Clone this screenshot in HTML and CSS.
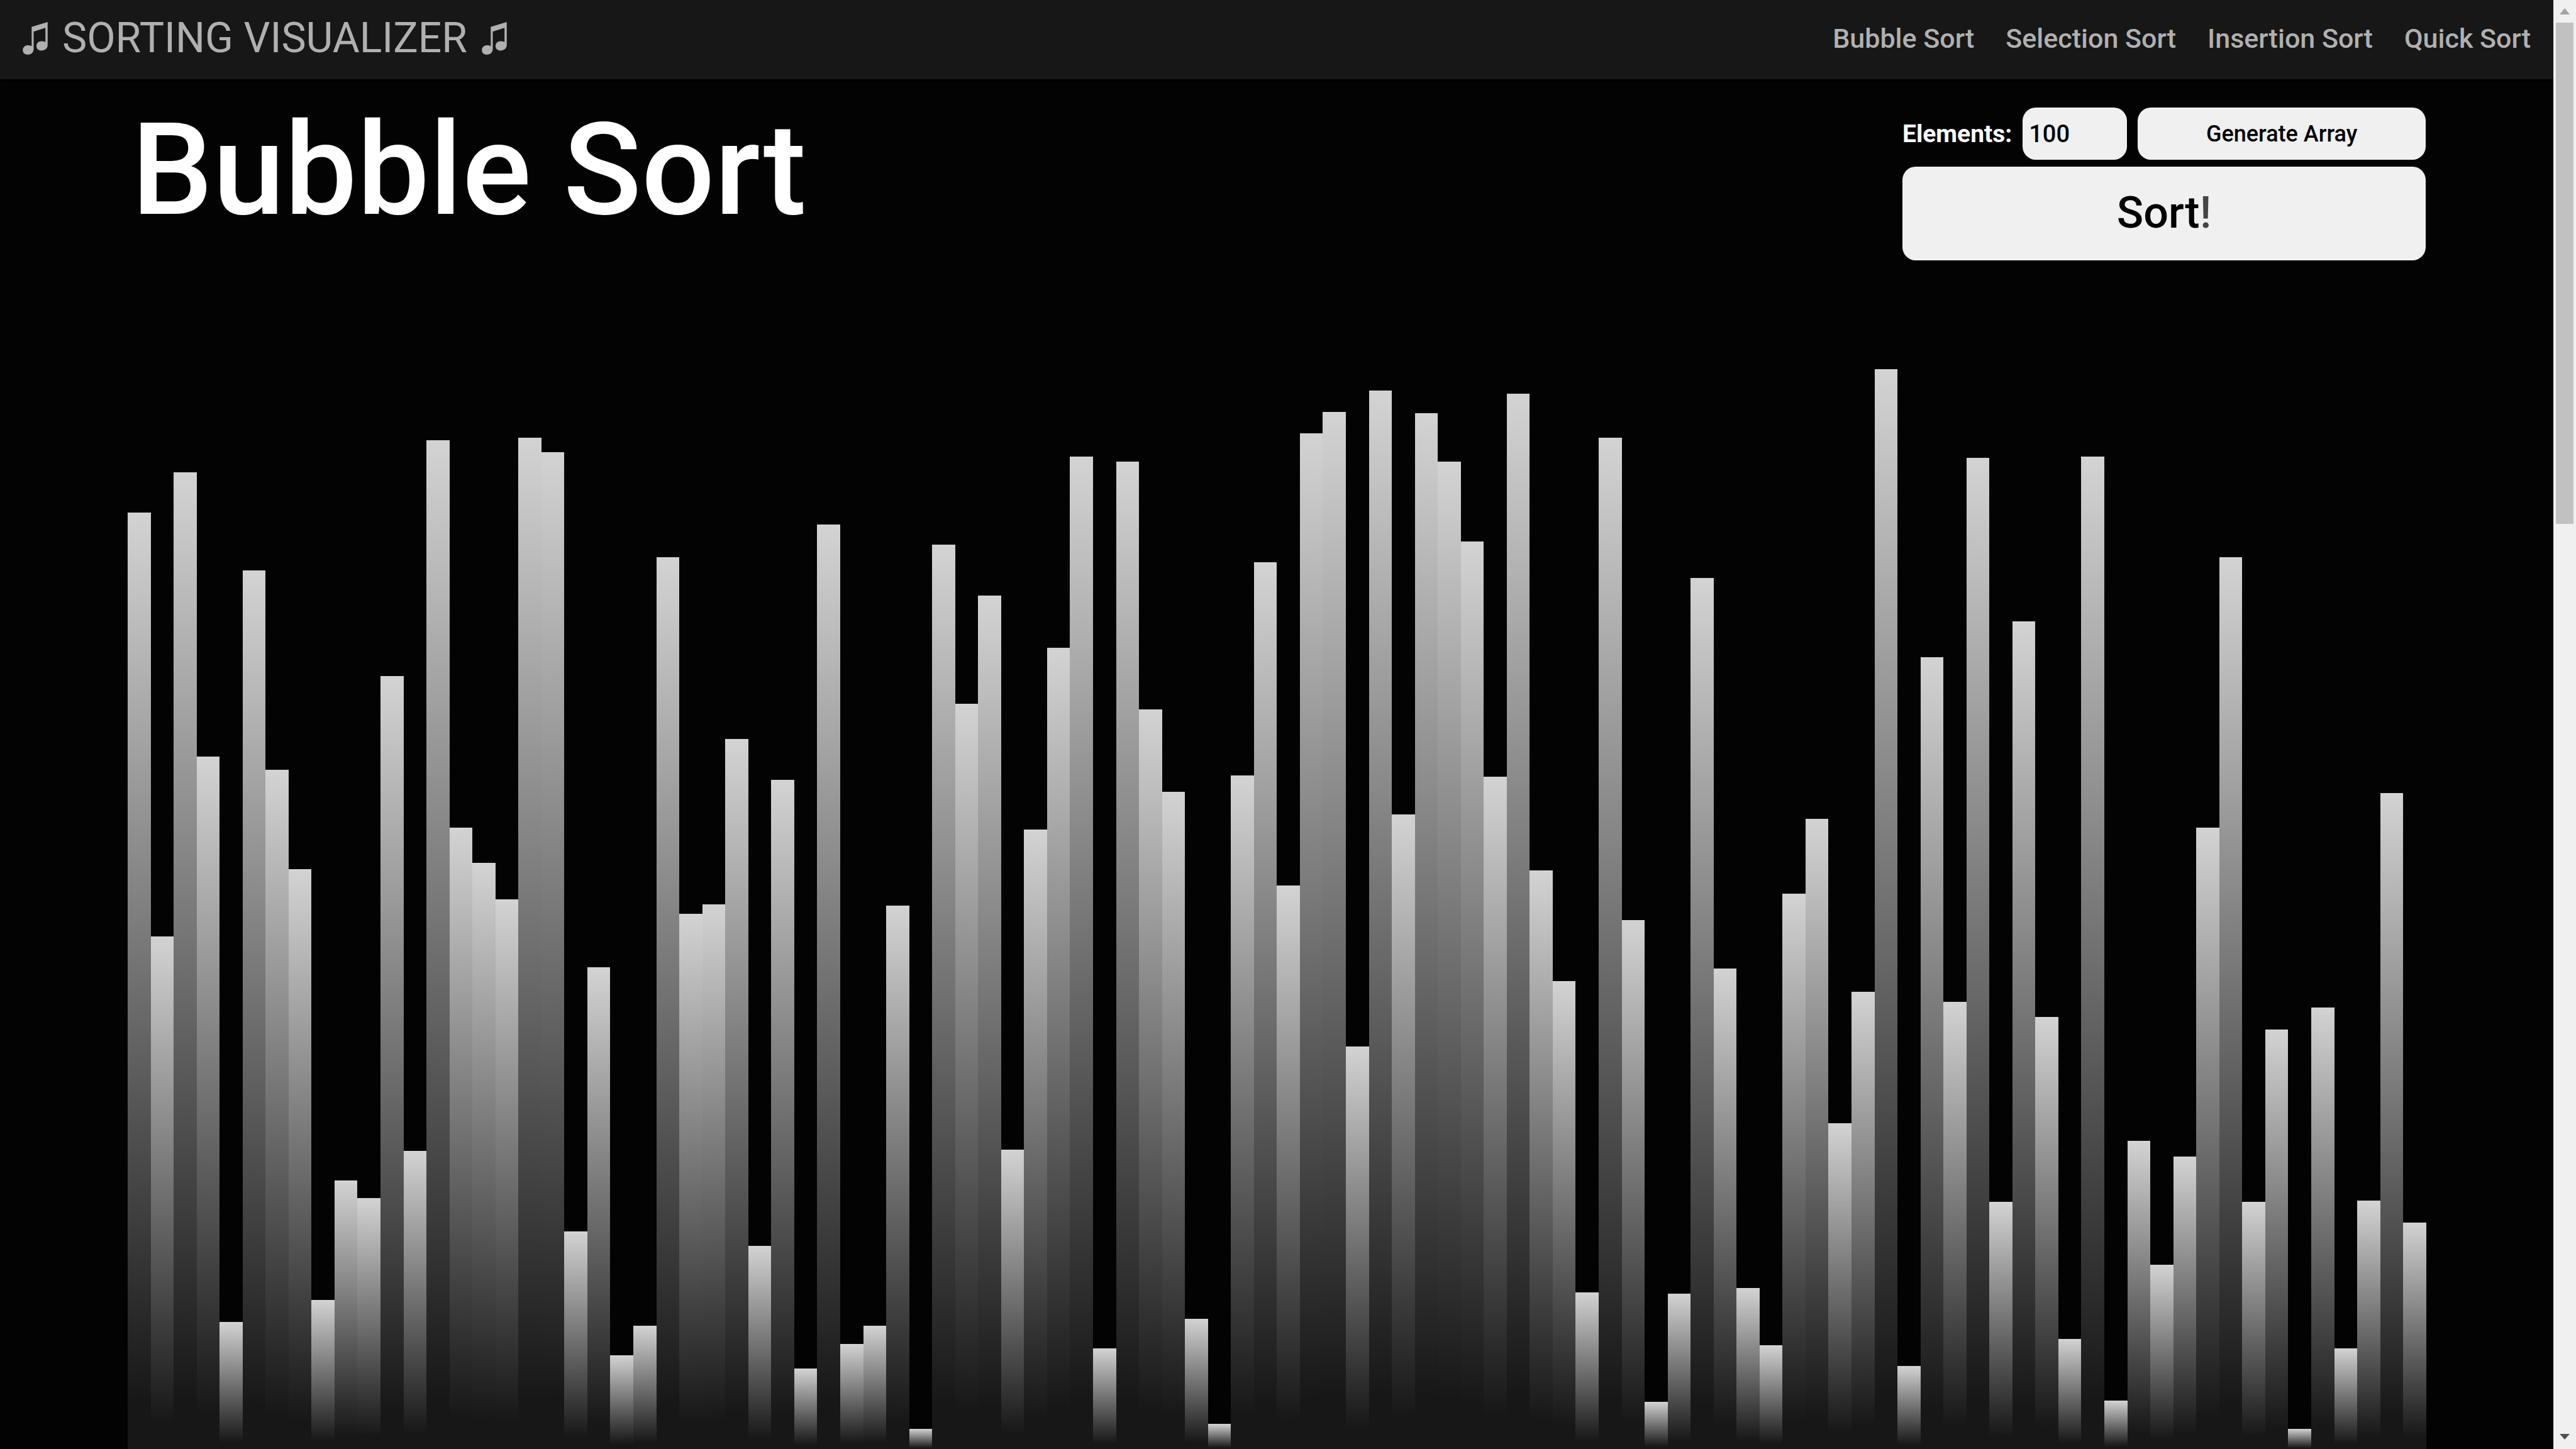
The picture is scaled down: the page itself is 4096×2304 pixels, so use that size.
FILE: index.html
```html
<!DOCTYPE html>
<html lang="en">
<head>
<meta charset="utf-8">
<title>Sorting Visualizer</title>
<link rel="stylesheet" href="styles.css">
</head>
<body>
<div class="page">
  <header class="navbar">
    <a class="brand" href="#">
      <svg class="note" viewBox="0 0 222 292" aria-hidden="true"><path d="M79 44 222 0V207C222 235 198 255 164 255 138 255 122 238 122 214 122 190 140 171 168 171 182 171 194 174 202 179V52L97 85V240C97 272 75 291 42 291 15 291 0 274 0 250 0 226 20 208 46 208 60 208 72 211 79 216Z"/></svg>
      <span>SORTING VISUALIZER</span>
      <svg class="note" viewBox="0 0 222 292" aria-hidden="true"><path d="M79 44 222 0V207C222 235 198 255 164 255 138 255 122 238 122 214 122 190 140 171 168 171 182 171 194 174 202 179V52L97 85V240C97 272 75 291 42 291 15 291 0 274 0 250 0 226 20 208 46 208 60 208 72 211 79 216Z"/></svg>
    </a>
    <nav class="links">
      <a href="#">Bubble Sort</a>
      <a href="#">Selection Sort</a>
      <a href="#">Insertion Sort</a>
      <a href="#">Quick Sort</a>
    </nav>
  </header>
  <main class="content">
    <section class="top">
      <h1 class="title">Bubble Sort</h1>
      <form class="panel" onsubmit="return false">
        <div class="row">
          <label class="label" for="count">Elements:</label>
          <input class="count" id="count" type="text" inputmode="numeric" value="100">
          <button class="generate" type="button">Generate Array</button>
        </div>
        <button class="sort" type="button">Sort<span class="bang">!</span></button>
      </form>
    </section>
    <section class="chart" id="chart" aria-label="Array values"></section>
  </main>
</div>
<div class="scrollbar" aria-hidden="true">
  <svg class="arrow arrow-up" viewBox="0 0 36 36"><path d="M18 13 26 23H10Z"/></svg>
  <div class="track"><div class="thumb"></div></div>
  <svg class="arrow arrow-down" viewBox="0 0 36 36"><path d="M10 12H26L18 21Z"/></svg>
</div>
<script src="chart.js"></script>
</body>
</html>
```
FILE: styles.css
```css
* {
  box-sizing: border-box;
}

body {
  margin: 0;
  height: 100vh;
  display: flex;
  overflow: hidden;
  background: #030303;
  color: #fff;
  font-family: Roboto, "Liberation Sans", sans-serif;
}

.page {
  flex: 1;
  min-width: 0;
  display: flex;
  flex-direction: column;
}

.navbar {
  display: flex;
  align-items: center;
  justify-content: space-between;
  height: 126px;
  padding: 0 36px 4px;
  background: #171717;
  box-shadow: 0 2px 2px #000;
}

.brand {
  display: flex;
  align-items: center;
  gap: 23px;
  color: #b0b0b0;
  font-size: 66px;
  line-height: 76px;
  text-decoration: none;
}

.note {
  width: 40px;
  height: 52px;
  fill: #b0b0b0;
}

.links {
  display: flex;
  gap: 50px;
}

.links a {
  color: #b0b0b0;
  font-size: 43px;
  font-weight: 500;
  line-height: 52px;
  text-decoration: none;
}

.content {
  flex: 1;
  min-height: 0;
  display: flex;
  flex-direction: column;
  padding: 45px 5% 0;
}

.top {
  display: flex;
  justify-content: space-between;
  align-items: flex-start;
  height: 389px;
}

.title {
  margin: 0;
  padding-left: 6px;
  font-size: 205px;
  font-weight: 500;
  line-height: 198px;
}

.panel {
  width: 832px;
  display: flex;
  flex-direction: column;
  gap: 11px;
}

.row {
  display: flex;
  align-items: center;
  gap: 17px;
}

.label {
  flex: 1;
  font-size: 39px;
  font-weight: 700;
}

.count,
.generate,
.sort {
  border: 0;
  border-radius: 21px;
  background: #f0f0f0;
  color: #000;
  font-family: inherit;
  font-weight: 500;
}

.count,
.generate {
  height: 83px;
  font-size: 36px;
}

.count {
  width: 166px;
  padding: 0 10px;
  font-size: 38px;
}

.generate {
  width: 459px;
}

.sort {
  height: 149px;
  padding: 0 0 4px;
  font-size: 70px;
}

.bang {
  color: #444;
}

.chart {
  flex: 1;
  min-height: 0;
  display: flex;
  align-items: flex-end;
}

.bar {
  flex: 1;
  background: linear-gradient(#d3d3d3, #171717 95%);
}

.scrollbar {
  width: 36px;
  display: flex;
  flex-direction: column;
  background: #f0f0f0;
}

.arrow {
  width: 36px;
  height: 36px;
}

.arrow-up {
  fill: #a3a3a3;
}

.arrow-down {
  fill: #505050;
}

.track {
  flex: 1;
  padding: 0 4px;
}

.thumb {
  height: 35.7%;
  background: #c1c1c1;
}
```
FILE: chart.js
```js
const MAX = 1568;
const values = [
  1339, 733, 1396, 990, 182, 1256, 971, 829, 213, 384,
  359, 1105, 426, 1442, 888, 838, 786, 1446, 1425, 311,
  689, 134, 176, 1275, 765, 779, 1015, 290, 957, 115,
  1322, 150, 176, 777, 29, 1293, 1065, 1220, 428, 886,
  1145, 1419, 144, 1412, 1057, 940, 186, 36, 963, 1268,
  806, 1452, 1483, 575, 1513, 907, 1481, 1412, 1297, 961,
  1509, 827, 669, 224, 1446, 756, 67, 222, 1245, 687,
  230, 148, 794, 901, 466, 654, 1544, 119, 1132, 639,
  1417, 353, 1183, 618, 157, 1419, 69, 441, 263, 418,
  888, 1275, 353, 600, 29, 631, 144, 355, 938, 324
];

const chart = document.getElementById("chart");
for (const value of values) {
  const bar = document.createElement("div");
  bar.className = "bar";
  bar.style.height = (value / MAX) * 100 + "%";
  chart.append(bar);
}
```
